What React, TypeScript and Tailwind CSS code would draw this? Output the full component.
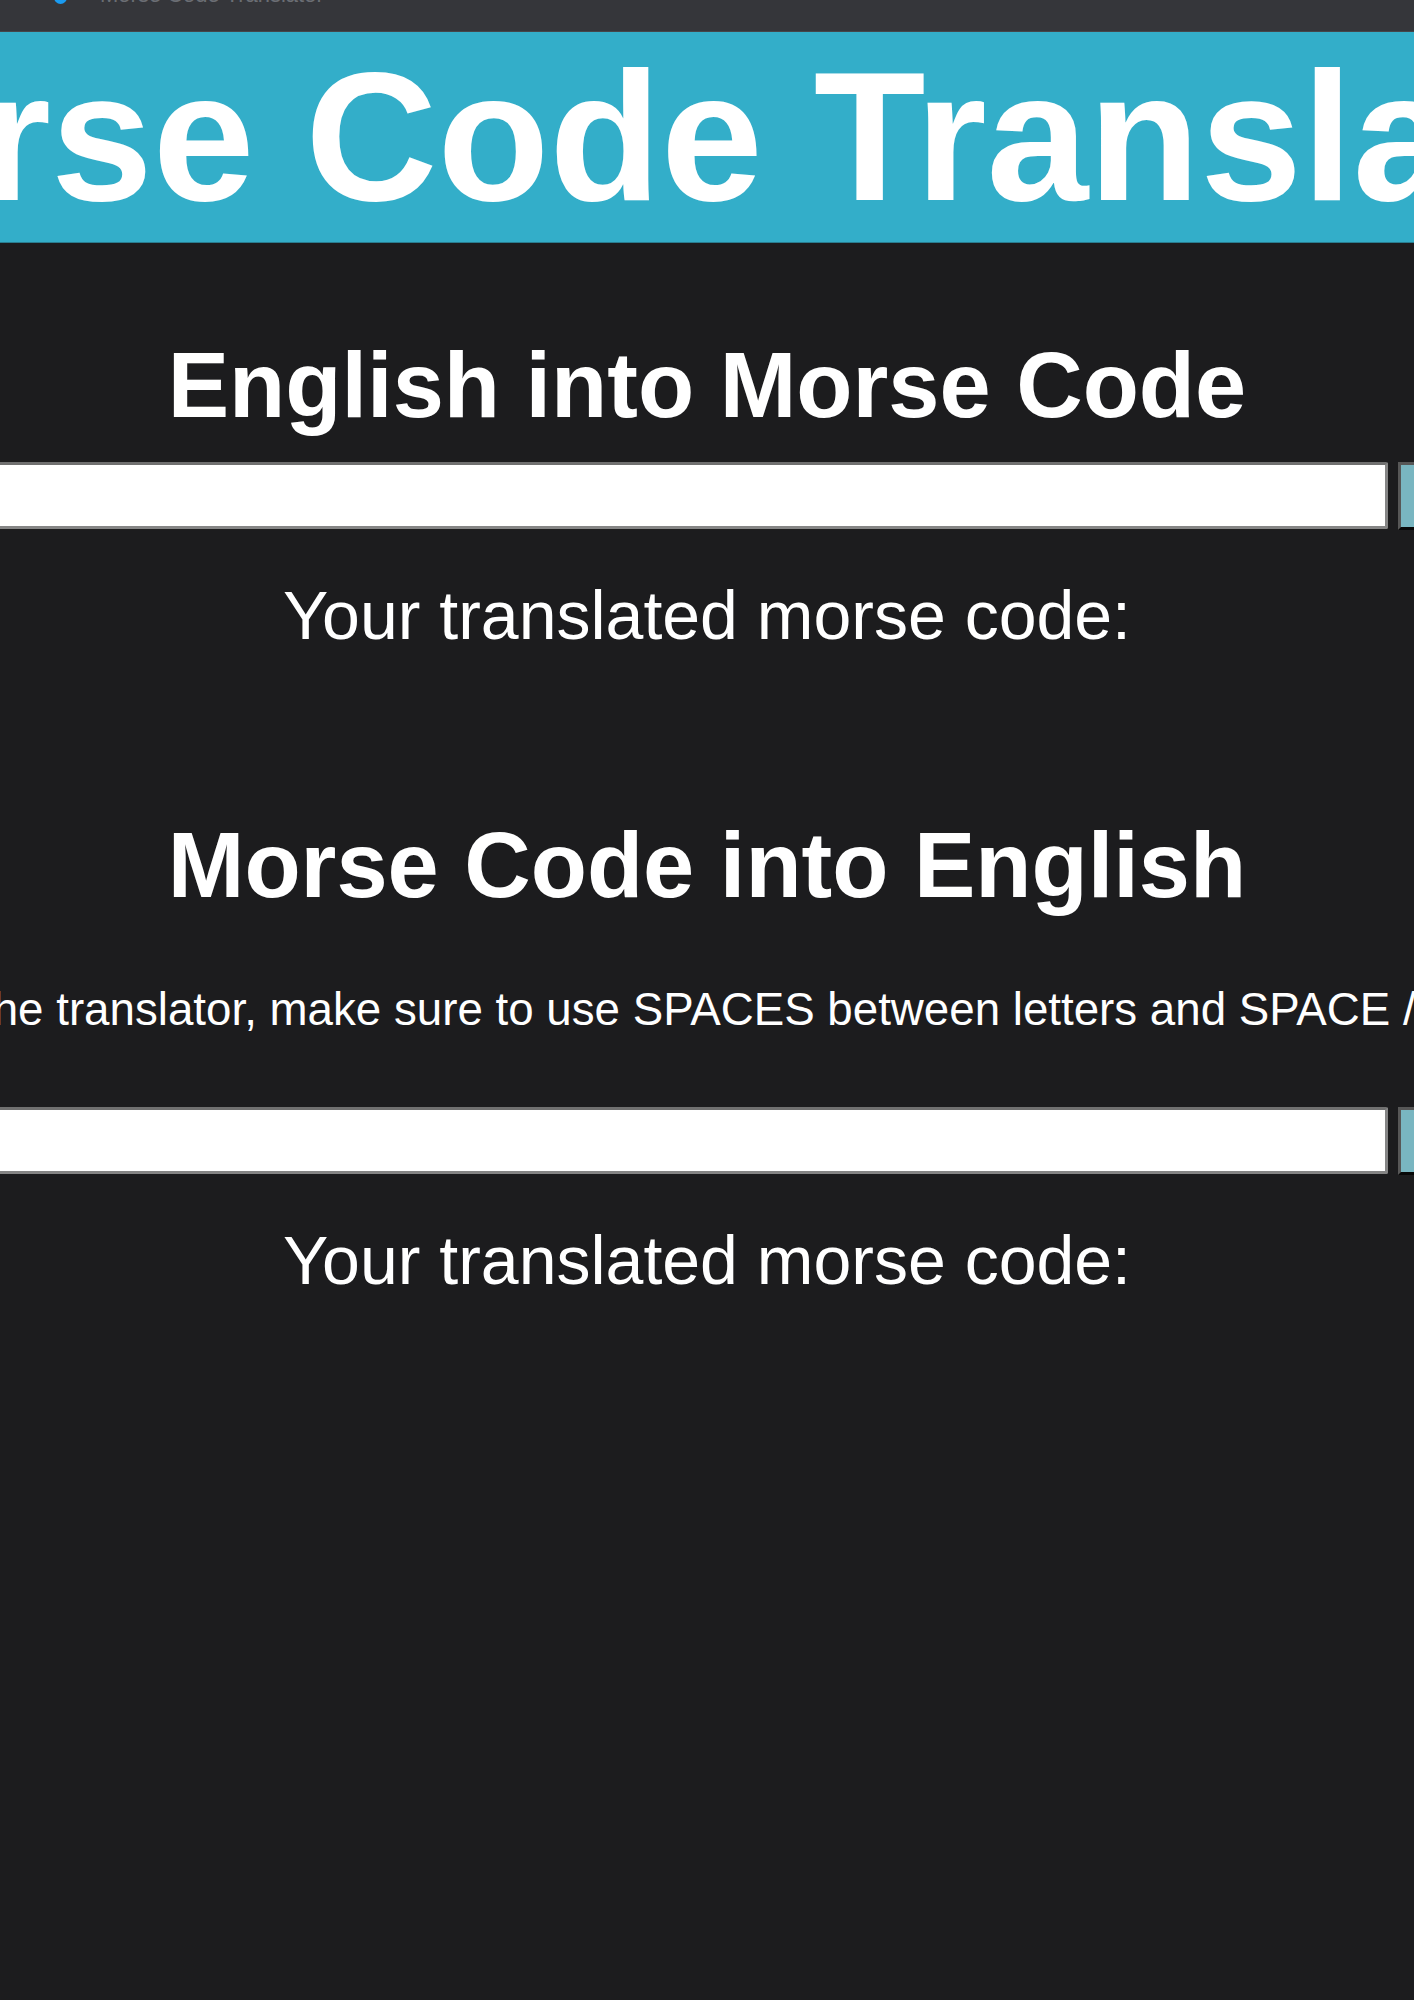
import { useState } from 'react'

const FONT = 'font-["Liberation_Sans",Arial,sans-serif]'

function TranslateRow({ value, onChange }: { value: string; onChange: (v: string) => void }) {
  return (
    <div className="flex justify-center gap-[10px]">
      <input
        value={value}
        onChange={(e) => onChange(e.target.value)}
        className="h-[67px] w-[1532px] shrink-0 rounded-[2px] border-[3px] border-[#858585] border-t-[#707070] bg-white px-3 text-[40px] text-black outline-none"
      />
      <button
        type="button"
        className="h-[68px] w-[160px] shrink-0 border-[3px] border-[#575757] border-b-[#080808] bg-[#79b6c1]"
      >
        <span className="sr-only">Translate</span>
      </button>
    </div>
  )
}

function ResultLabel() {
  return <p className="mt-[46px] whitespace-nowrap text-center text-[68px] leading-[78px] text-white">Your translated morse code:</p>
}

export default function App() {
  const [english, setEnglish] = useState('')
  const [morse, setMorse] = useState('')

  return (
    <div className={`min-h-screen w-full overflow-hidden bg-[#1c1c1e] ${FONT}`}>
      {/* window strip */}
      <div className="relative h-[32px] overflow-hidden border-b border-[#45464a] bg-[#35363a]">
        <span className="absolute left-[54px] top-[-9px] h-[13px] w-[13px] rounded-full bg-[#1a9bf0]" />
        <span className="absolute left-[100px] top-[-22px] whitespace-nowrap text-[22px] text-[#6b6e74]">Morse Code Translator</span>
      </div>

      <header className="border-b border-[#2a7d90] bg-[#33aec9]">
        <h1 className="flex justify-center whitespace-nowrap text-[183px] font-bold leading-[210px] text-white">
          Morse Code Translator
        </h1>
      </header>

      <section>
        <h2 className="mt-[89px] whitespace-nowrap text-center text-[92px] font-bold leading-[106px] text-white">English into Morse Code</h2>
        <div className="mt-[24px]">
          <TranslateRow value={english} onChange={setEnglish} />
        </div>
        <ResultLabel />
      </section>

      <section>
        <h2 className="mt-[158px] whitespace-nowrap text-center text-[92px] font-bold leading-[106px] text-white">Morse Code into English</h2>
        <p className="mt-[66px] flex justify-center whitespace-nowrap text-[45.7px] leading-[52px] text-white">
          Whenever you're using the translator, make sure to use SPACES between letters and SPACE / SPACE between words.
        </p>
        <div className="mt-[71px]">
          <TranslateRow value={morse} onChange={setMorse} />
        </div>
        <ResultLabel />
      </section>
    </div>
  )
}
